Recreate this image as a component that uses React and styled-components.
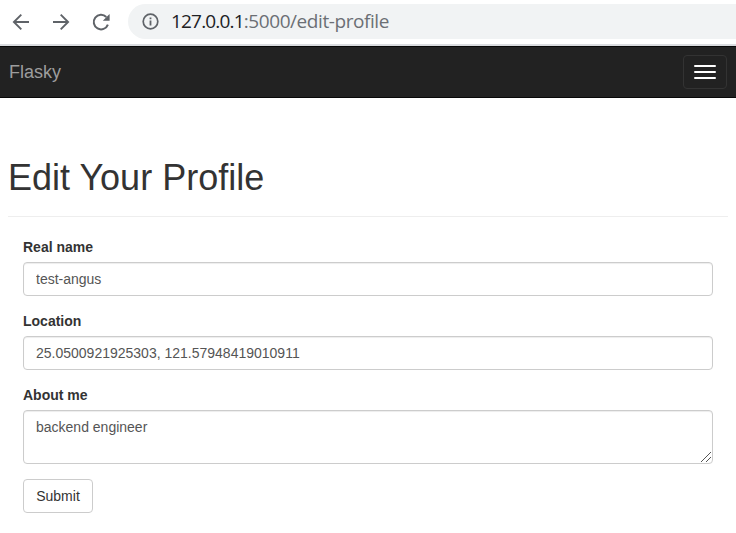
import React from "react";
import styled, { createGlobalStyle } from "styled-components";

const GlobalStyle = createGlobalStyle`
  *, *::before, *::after { box-sizing: border-box; }
  body {
    margin: 0;
    background: #fff;
    color: #333;
    font: 14px/20px "Liberation Sans", Arial, sans-serif;
    overflow: hidden;
  }
`;

const BrowserBar = styled.header`
  display: flex;
  align-items: flex-start;
  height: 46px;
  padding-top: 4px;
  border-bottom: 2px solid #dadce0;
  overflow: hidden;
`;

const Tools = styled.div`
  display: flex;
  gap: 16px;
  width: 128px;
  padding-left: 8.6px;
`;

const ToolButton = styled.button`
  display: flex;
  align-items: center;
  justify-content: center;
  width: 24px;
  height: 35px;
  padding: 0;
  border: 0;
  background: none;
  color: #5f6368;
`;

const AddressBar = styled.div`
  display: flex;
  flex: 1;
  align-items: center;
  height: 35px;
  padding-left: 14px;
  border-radius: 18px 0 0 18px;
  background: #f1f3f4;
  color: #5f6368;
`;

const Url = styled.span`
  margin-left: 12px;
  font: 400 19px/35px "Open Sans", "Noto Sans", sans-serif;
  letter-spacing: -0.43px;
  white-space: nowrap;
  color: #6b6f74;
`;

const Host = styled.span`
  letter-spacing: -0.82px;
  color: #202124;
`;

const Navbar = styled.nav`
  display: flex;
  align-items: center;
  justify-content: space-between;
  height: 52px;
  padding: 0 9px;
  border: solid #080808;
  border-width: 1px 0;
  background: #222;
`;

const Brand = styled.a`
  font-size: 18px;
  line-height: 20px;
  color: #9d9d9d;
`;

const MenuToggle = styled.button`
  display: flex;
  flex-direction: column;
  gap: 4px;
  width: 44px;
  height: 34px;
  padding: 9px 10px;
  border: 1px solid #333;
  border-radius: 4px;
  background: transparent;
`;

const MenuBar = styled.span`
  height: 2px;
  border-radius: 1px;
  background: #fff;
`;

const Page = styled.main`
  padding: 60px 8px 0;
`;

const PageHeader = styled.div`
  height: 59px;
  margin-bottom: 20px;
  border-bottom: 1px solid #eee;
`;

const Title = styled.h1`
  margin: 0;
  font-size: 36px;
  font-weight: 500;
  line-height: 39.6px;
`;

const Form = styled.form`
  padding: 0 15px;
`;

const Field = styled.div`
  position: relative;
  display: flex;
  flex-direction: column;
  gap: 5px;
  margin-bottom: 15px;
`;

const Label = styled.label`
  font-weight: 700;
`;

const Input = styled.input`
  width: 100%;
  height: ${({ $tall }) => ($tall ? "54px" : "34px")};
  padding: 6px 12px;
  border: 1px solid #ccc;
  border-radius: 4px;
  outline: 0;
  resize: none;
  background: #fff;
  box-shadow: inset 0 1px 1px rgba(0, 0, 0, 0.075);
  color: #555;
  font: inherit;
`;

const ResizeGrip = styled.svg`
  position: absolute;
  right: 2px;
  bottom: 2px;
  pointer-events: none;
`;

const Submit = styled.button`
  width: 70px;
  height: 34px;
  padding: 6px 12px;
  border: 1px solid #ccc;
  border-radius: 4px;
  background: #fff;
  color: #333;
  font: inherit;
`;

const BackIcon = () => (
  <svg width="24" height="24" viewBox="0 0 24 24" fill="none" stroke="currentColor" strokeWidth="1.9">
    <path d="M20 12H5.2M12.3 4.6L4.9 12l7.4 7.4" />
  </svg>
);

const ForwardIcon = () => (
  <svg width="24" height="24" viewBox="0 0 24 24" fill="none" stroke="currentColor" strokeWidth="1.9">
    <path d="M4 12h14.8M11.7 4.6l7.4 7.4-7.4 7.4" />
  </svg>
);

const ReloadIcon = () => (
  <svg width="24" height="24" viewBox="0 0 24 24">
    <path d="M18.9 14.6A7.3 7.3 0 1 1 17.3 7" fill="none" stroke="currentColor" strokeWidth="2" />
    <path d="M20.6 4v6.8h-6.8z" fill="currentColor" />
  </svg>
);

const InfoIcon = () => (
  <svg width="17" height="17" viewBox="0 0 17 17" fill="none" stroke="currentColor">
    <circle cx="8.5" cy="8.5" r="7.3" strokeWidth="1.7" />
    <path d="M8.5 7.5v5M8.5 4.5v1.8" strokeWidth="1.8" />
  </svg>
);

export default function App() {
  return (
    <>
      <GlobalStyle />
      <BrowserBar>
        <Tools>
          <ToolButton aria-label="Back"><BackIcon /></ToolButton>
          <ToolButton aria-label="Forward"><ForwardIcon /></ToolButton>
          <ToolButton aria-label="Reload"><ReloadIcon /></ToolButton>
        </Tools>
        <AddressBar>
          <InfoIcon />
          <Url><Host>127.0.0.1</Host>:5000/edit-profile</Url>
        </AddressBar>
      </BrowserBar>
      <Navbar>
        <Brand>Flasky</Brand>
        <MenuToggle aria-label="Toggle navigation">
          <MenuBar /><MenuBar /><MenuBar />
        </MenuToggle>
      </Navbar>
      <Page>
        <PageHeader><Title>Edit Your Profile</Title></PageHeader>
        <Form>
          <Field>
            <Label htmlFor="name">Real name</Label>
            <Input id="name" defaultValue="test-angus" />
          </Field>
          <Field>
            <Label htmlFor="location">Location</Label>
            <Input id="location" defaultValue="25.0500921925303, 121.57948419010911" />
          </Field>
          <Field>
            <Label htmlFor="about">About me</Label>
            <Input as="textarea" id="about" $tall defaultValue="backend engineer" />
            <ResizeGrip width="10" height="10" viewBox="0 0 10 10" stroke="#555">
              <path d="M0 10L10 0M5 10l5-5" />
            </ResizeGrip>
          </Field>
          <Submit type="button">Submit</Submit>
        </Form>
      </Page>
    </>
  );
}
